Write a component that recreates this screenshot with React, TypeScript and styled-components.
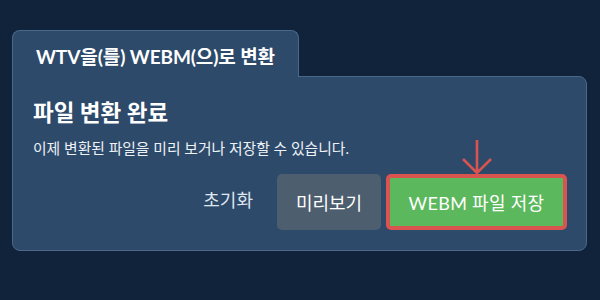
import React from "react";
import styled, { createGlobalStyle } from "styled-components";

const Global = createGlobalStyle`
  html, body { margin: 0; padding: 0; background: #11233a; }
  body { font-family: Lato, "Noto Sans CJK KR", sans-serif; }
`;

const Page = styled.div`
  width: 600px;
  height: 300px;
  box-sizing: border-box;
  padding: 30px 13px 0 12px;
  background: #11233a;
`;

const Tab = styled.div`
  position: relative;
  z-index: 1;
  display: inline-flex;
  align-items: center;
  height: 47px;
  box-sizing: border-box;
  padding: 2px 23px 0 23px;
  background: #2d4a6b;
  border: 1px solid #4a6889;
  border-bottom: none;
  border-radius: 8px 8px 0 0;
  margin-bottom: -1px;
  color: #ffffff;
  font-size: 19px;
  font-weight: 700;
  letter-spacing: -0.1px;
`;

const Panel = styled.div`
  position: relative;
  box-sizing: border-box;
  height: 175px;
  padding: 22px 19px 20px 20px;
  background: #2d4a6b;
  border: 1px solid #4a6889;
  border-radius: 0 8px 8px 8px;
  display: flex;
  flex-direction: column;
  align-items: stretch;
`;

const Heading = styled.h2`
  margin: 0;
  padding: 0;
  font-size: 22.5px;
  line-height: 28px;
  font-weight: 700;
  color: #ffffff;
`;

const Sub = styled.p`
  margin: 11px 0 0 0;
  padding: 0;
  font-size: 14.8px;
  line-height: 20px;
  color: #eef2f6;
`;

const Actions = styled.div`
  margin-top: auto;
  display: flex;
  justify-content: flex-end;
  align-items: center;
  gap: 5px;
`;

const LinkButton = styled.button`
  background: none;
  border: none;
  color: #dfe6ee;
  font-family: inherit;
  font-size: 18px;
  padding: 0 19px 6px 0;
`;

const Button = styled.button<{ $variant: "gray" | "green"; $width: number }>`
  position: relative;
  width: ${(p) => p.$width}px;
  height: 56px;
  box-sizing: border-box;
  padding: 0;
  display: flex;
  align-items: center;
  justify-content: center;
  border-radius: 5px;
  font-family: inherit;
  font-size: 18px;
  color: #ffffff;
  background: ${(p) => (p.$variant === "green" ? "#5cb85c" : "#4d5e6f")};
  border: ${(p) => (p.$variant === "green" ? "4.5px solid #d9534f" : "none")};
  letter-spacing: ${(p) => (p.$variant === "green" ? "0.3px" : "0")};
`;

const Arrow = styled.svg`
  position: absolute;
  left: 50%;
  top: -39px;
  transform: translateX(-50%);
`;

export default function App() {
  return (
    <>
      <Global />
      <Page>
        <Tab>WTV을(를) WEBM(으)로 변환</Tab>
        <Panel>
          <Heading>파일 변환 완료</Heading>
          <Sub>이제 변환된 파일을 미리 보거나 저장할 수 있습니다.</Sub>
          <Actions>
            <LinkButton>초기화</LinkButton>
            <Button $variant="gray" $width={104}>
              미리보기
            </Button>
            <Button $variant="green" $width={181}>
              <Arrow width="32" height="37" viewBox="0 0 32 37">
                <path
                  d="M16 1 V34 M2 20 L16 34 L30 20"
                  fill="none"
                  stroke="#d9534f"
                  strokeWidth="2.6"
                />
              </Arrow>
              WEBM 파일 저장
            </Button>
          </Actions>
        </Panel>
      </Page>
    </>
  );
}
